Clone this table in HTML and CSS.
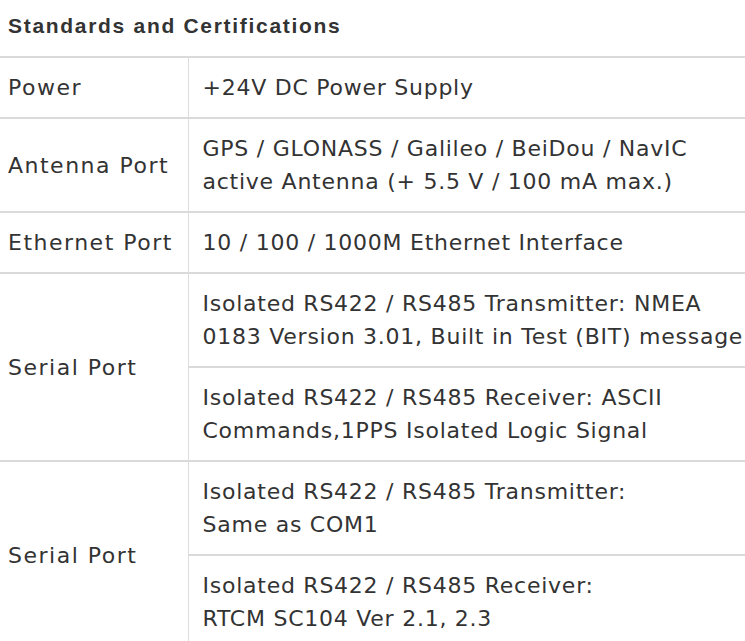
FILE: index.html
```html
<!DOCTYPE html>
<html>
<head>
<meta charset="utf-8">
<link rel="stylesheet" href="styles.css">
</head>
<body>
<h2 class="title">Standards and Certifications</h2>
<table class="spec">
  <colgroup>
    <col class="col-label">
    <col class="col-value">
  </colgroup>
  <tr>
    <th class="label">Power</th>
    <td class="value">+24V DC Power Supply</td>
  </tr>
  <tr>
    <th class="label">Antenna Port</th>
    <td class="value">GPS / GLONASS / Galileo / BeiDou / NavIC<br>active Antenna (+ 5.5 V / 100 mA max.)</td>
  </tr>
  <tr>
    <th class="label">Ethernet Port</th>
    <td class="value">10 / 100 / 1000M Ethernet Interface</td>
  </tr>
  <tr>
    <th class="label" rowspan="2">Serial Port</th>
    <td class="value">Isolated RS422 / RS485 Transmitter: NMEA<br>0183 Version 3.01, Built in Test (BIT) message</td>
  </tr>
  <tr>
    <td class="value">Isolated RS422 / RS485 Receiver: ASCII<br>Commands,1PPS Isolated Logic Signal</td>
  </tr>
  <tr>
    <th class="label" rowspan="2">Serial Port</th>
    <td class="value">Isolated RS422 / RS485 Transmitter:<br>Same as COM1</td>
  </tr>
  <tr>
    <td class="value">Isolated RS422 / RS485 Receiver:<br>RTCM SC104 Ver 2.1, 2.3</td>
  </tr>
</table>
</body>
</html>
```
FILE: styles.css
```css
html, body {
  margin: 0;
  padding: 0;
  background: #ffffff;
  overflow: hidden;
}

.title {
  margin: 0 0 4px 0;
  padding: 0 8px;
  font-family: "Liberation Sans", Arial, sans-serif;
  font-weight: bold;
  font-size: 21px;
  letter-spacing: 1.7px;
  line-height: 52px;
  color: #333333;
}

.spec {
  width: 100%;
  table-layout: fixed;
  border-collapse: collapse;
  font-family: "DejaVu Sans", sans-serif;
  font-size: 22px;
  letter-spacing: 0.75px;
  line-height: 33px;
  color: #333333;
}

.col-label {
  width: 188px;
}

.spec th,
.spec td {
  border-top: 2px solid #dadada;
  padding: 13px 0;
  text-align: left;
  vertical-align: middle;
  white-space: nowrap;
  overflow: visible;
}

.label {
  font-weight: normal;
  letter-spacing: 1.5px;
  padding-left: 8px !important;
  border-right: 1px solid #dddddd;
}

.value {
  padding-left: 14px !important;
}
```
